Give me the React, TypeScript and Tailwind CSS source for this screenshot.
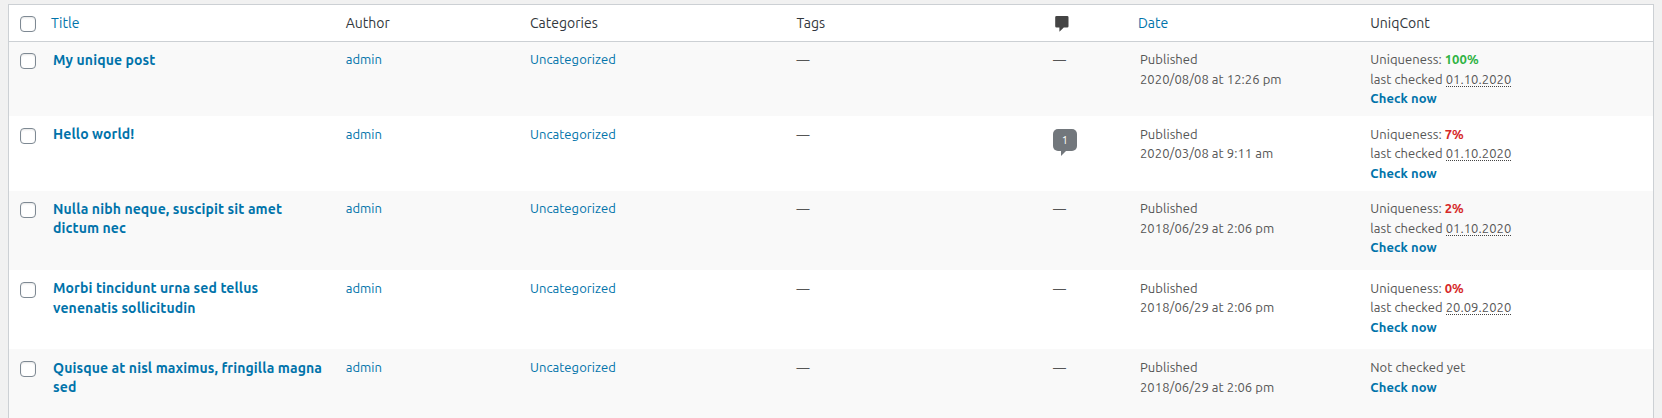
import type { ReactNode } from "react";

const COLS = "grid grid-cols-[34px_292.7px_184.3px_266.6px_256.4px_87px_230px_1fr]";

type Check = { score: string; good?: boolean; date: string };
type Post = {
  title: string;
  size: string;
  comments?: number;
  date: string;
  check?: Check;
};

const posts: Post[] = [
  { title: "My unique post", size: "h-[74px] pt-2", date: "2020/08/08 at 12:26 pm", check: { score: "100%", good: true, date: "01.10.2020" } },
  { title: "Hello world!", size: "h-[75px] pt-[8.5px]", comments: 1, date: "2020/03/08 at 9:11 am", check: { score: "7%", date: "01.10.2020" } },
  { title: "Nulla nibh neque, suscipit sit amet dictum nec", size: "h-[79px] pt-2", date: "2018/06/29 at 2:06 pm", check: { score: "2%", date: "01.10.2020" } },
  { title: "Morbi tincidunt urna sed tellus venenatis sollicitudin", size: "h-[79px] pt-[8.5px]", date: "2018/06/29 at 2:06 pm", check: { score: "0%", date: "20.09.2020" } },
  { title: "Quisque at nisl maximus, fringilla magna sed", size: "h-[79px] pt-[9px]", date: "2018/06/29 at 2:06 pm" },
];

function Checkbox({ label }: { label: string }) {
  return (
    <input
      type="checkbox"
      aria-label={label}
      className="block size-4 appearance-none rounded-[4px] border border-[#7e8993] bg-white shadow-[inset_0_1px_2px_rgba(0,0,0,0.1)]"
    />
  );
}

function Link({ children, className = "" }: { children: ReactNode; className?: string }) {
  return (
    <a href="#" className={`text-[#0073aa] ${className}`}>
      {children}
    </a>
  );
}

function CommentIcon() {
  return (
    <svg viewBox="0 0 14 16" className="h-4 w-3.5" fill="#444" aria-label="Comments">
      <path d="M1.5 0h10.7a1.3 1.3 0 0 1 1.3 1.3v8.9a1.3 1.3 0 0 1-1.3 1.3H8.8L4.4 15.8v-4.3H1.5A1.3 1.3 0 0 1 .2 10.2V1.3A1.3 1.3 0 0 1 1.5 0z" />
    </svg>
  );
}

function CommentBubble({ count }: { count: number }) {
  return (
    <a href="#" className="flex w-6 flex-col pt-[4.5px]">
      <span className="flex h-[22px] items-center justify-center rounded-[5px] bg-[#72777c] text-[11px] leading-none text-white">
        {count}
      </span>
      <svg viewBox="0 0 5 5" className="ml-2 h-[5px] w-[5px]" fill="#72777c">
        <path d="M0 0h5L0 5z" />
      </svg>
    </a>
  );
}

function Row({ post }: { post: Post }) {
  const { title, size, comments, date, check } = post;
  return (
    <div className={`${COLS} ${size} text-[13px] leading-[19.5px] tracking-[0.06px] text-[#555] odd:bg-[#f9f9f9]`}>
      <div className="pt-[3px] pl-[11px]">
        <Checkbox label={title} />
      </div>
      <div className="pt-[0.9px] pr-1.5 pl-2.5">
        <Link className="block max-w-[272px] text-[14px] leading-[19.6px] font-bold tracking-[0.11px]">{title}</Link>
      </div>
      <div className="px-2.5"><Link>admin</Link></div>
      <div className="px-2.5"><Link>Uncategorized</Link></div>
      <div className="px-2.5">—</div>
      <div className="px-2.5">{comments ? <CommentBubble count={comments} /> : "—"}</div>
      <div className="px-2.5">
        <p>Published</p>
        <p>{date}</p>
      </div>
      <div className="pl-[10.3px]">
        {check ? (
          <>
            <p>
              Uniqueness:{" "}
              <b className={check.good ? "text-[#2fb344]" : "text-[#d62828]"}>{check.score}</b>
            </p>
            <p>
              last checked <span className="border-b border-dotted border-[#444]">{check.date}</span>
            </p>
          </>
        ) : (
          <p>Not checked yet</p>
        )}
        <p><Link className="font-bold tracking-[0.1px]">Check now</Link></p>
      </div>
    </div>
  );
}

export default function App() {
  return (
    <main className="flex h-[418px] overflow-hidden bg-[#f1f1f1] px-2 pt-1 font-['Ubuntu','Noto_Sans',sans-serif]">
      <div className="flex h-[440px] w-[1646px] shrink-0 flex-col border border-[#ccd0d4] bg-white">
        <div className={`${COLS} h-[37px] shrink-0 border-b border-[#ccd0d4] pt-[9px] text-[14px] leading-[19.6px] text-[#32373c]`}>
          <div className="pt-0.5 pl-[11px]"><Checkbox label="Select all" /></div>
          <div className="px-2"><Link>Title</Link></div>
          <div className="px-2.5">Author</div>
          <div className="px-2.5">Categories</div>
          <div className="px-2.5">Tags</div>
          <div className="pt-0.5 pl-3"><CommentIcon /></div>
          <div className="px-2"><Link>Date</Link></div>
          <div className="pl-[10.3px]">UniqCont</div>
        </div>
        <div>
          {posts.map((post) => (
            <Row key={post.title} post={post} />
          ))}
        </div>
      </div>
    </main>
  );
}
